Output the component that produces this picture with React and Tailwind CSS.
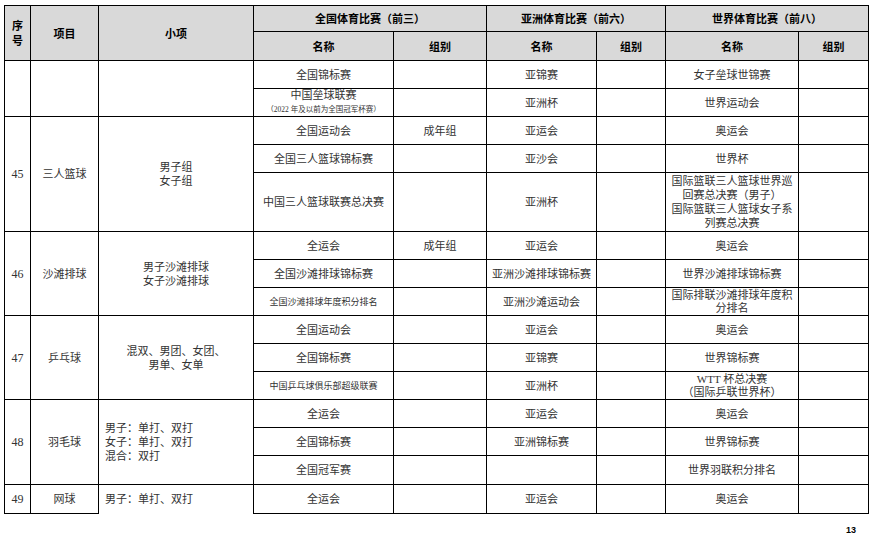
import React from "react"

const body = "font-['Liberation_Serif','Noto_Sans_CJK_SC',serif]"
const cell = "border border-black text-center align-middle text-[11px] text-[#333] leading-[14px] px-1"
const head = "border border-black bg-[#d9d9d9] text-center align-middle text-[11px] font-bold text-black font-['Noto_Sans_CJK_SC',sans-serif]"
const num = `${cell} text-[12px]`

function Row({ name1, group1 = "", name2 = "", name3 = "", h = "h-[28px]", lead }) {
  return (
    <tr className={h}>
      {lead}
      <td className={cell}>{name1}</td>
      <td className={cell}>{group1}</td>
      <td className={cell}>{name2}</td>
      <td className={cell}></td>
      <td className={cell}>{name3}</td>
      <td className={cell}></td>
    </tr>
  )
}

export default function App() {
  return (
    <div className={`w-[874px] h-[539px] bg-white pt-[5px] pl-[4px] ${body}`}>
      <table className="border-collapse table-fixed w-[864px]">
        <colgroup>
          <col className="w-[26px]" />
          <col className="w-[68px]" />
          <col className="w-[155px]" />
          <col className="w-[140px]" />
          <col className="w-[93px]" />
          <col className="w-[110px]" />
          <col className="w-[69px]" />
          <col className="w-[133px]" />
          <col className="w-[70px]" />
        </colgroup>
        <thead>
          <tr className="h-[26px]">
            <th rowSpan={2} className={`${head} leading-[15px]`}>序<br />号</th>
            <th rowSpan={2} className={head}>项目</th>
            <th rowSpan={2} className={head}>小项</th>
            <th colSpan={2} className={head}>全国体育比赛（前三）</th>
            <th colSpan={2} className={head}>亚洲体育比赛（前六）</th>
            <th colSpan={2} className={head}>世界体育比赛（前八）</th>
          </tr>
          <tr className="h-[29px]">
            <th className={head}>名称</th>
            <th className={head}>组别</th>
            <th className={head}>名称</th>
            <th className={head}>组别</th>
            <th className={head}>名称</th>
            <th className={head}>组别</th>
          </tr>
        </thead>
        <tbody>
          {/* 上页延续：垒球 */}
          <Row
            lead={
              <>
                <td rowSpan={2} className={cell}></td>
                <td rowSpan={2} className={cell}></td>
                <td rowSpan={2} className={cell}></td>
              </>
            }
            name1="全国锦标赛"
            name2="亚锦赛"
            name3="女子垒球世锦赛"
          />
          <Row
            name1={
              <div className="flex flex-col items-center">
                <span className="leading-[13px]">中国垒球联赛</span>
                <span className="text-[7.5px] leading-[12px] mt-[2px]">（2022 年及以前为全国冠军杯赛）</span>
              </div>
            }
            name2="亚洲杯"
            name3="世界运动会"
          />

          {/* 45 三人篮球 */}
          <Row
            lead={
              <>
                <td rowSpan={3} className={num}>45</td>
                <td rowSpan={3} className={cell}>三人篮球</td>
                <td rowSpan={3} className={cell}>男子组<br />女子组</td>
              </>
            }
            name1="全国运动会"
            group1="成年组"
            name2="亚运会"
            name3="奥运会"
          />
          <Row name1="全国三人篮球锦标赛" name2="亚沙会" name3="世界杯" />
          <Row
            h="h-[59px]"
            name1="中国三人篮球联赛总决赛"
            name2="亚洲杯"
            name3={
              <>
                国际篮联三人篮球世界巡<br />回赛总决赛（男子）<br />国际篮联三人篮球女子系<br />列赛总决赛
              </>
            }
          />

          {/* 46 沙滩排球 */}
          <Row
            lead={
              <>
                <td rowSpan={3} className={num}>46</td>
                <td rowSpan={3} className={cell}>沙滩排球</td>
                <td rowSpan={3} className={cell}>男子沙滩排球<br />女子沙滩排球</td>
              </>
            }
            name1="全运会"
            group1="成年组"
            name2="亚运会"
            name3="奥运会"
          />
          <Row name1="全国沙滩排球锦标赛" name2="亚洲沙滩排球锦标赛" name3="世界沙滩排球锦标赛" />
          <Row
            name1={<span className="text-[9px]">全国沙滩排球年度积分排名</span>}
            name2="亚洲沙滩运动会"
            name3={
              <span className="leading-[13px] block">
                国际排联沙滩排球年度积<br />分排名
              </span>
            }
          />

          {/* 47 乒乓球 */}
          <Row
            lead={
              <>
                <td rowSpan={3} className={num}>47</td>
                <td rowSpan={3} className={cell}>乒乓球</td>
                <td rowSpan={3} className={cell}>混双、男团、女团、<br />男单、女单</td>
              </>
            }
            name1="全国运动会"
            name2="亚运会"
            name3="奥运会"
          />
          <Row name1="全国锦标赛" name2="亚锦赛" name3="世界锦标赛" />
          <Row
            name1={<span className="text-[9px]">中国乒乓球俱乐部超级联赛</span>}
            name2="亚洲杯"
            name3={
              <span className="leading-[13px] block">
                WTT 杯总决赛<br />（国际乒联世界杯）
              </span>
            }
          />

          {/* 48 羽毛球 */}
          <Row
            lead={
              <>
                <td rowSpan={3} className={num}>48</td>
                <td rowSpan={3} className={cell}>羽毛球</td>
                <td rowSpan={3} className={`${cell} text-left pl-[6px]`}>
                  男子：单打、双打<br />女子：单打、双打<br />混合：双打
                </td>
              </>
            }
            name1="全运会"
            name2="亚运会"
            name3="奥运会"
          />
          <Row name1="全国锦标赛" name2="亚洲锦标赛" name3="世界锦标赛" />
          <Row h="h-[29px]" name1="全国冠军赛" name3="世界羽联积分排名" />

          {/* 49 网球 */}
          <Row
            h="h-[29px]"
            lead={
              <>
                <td className={num}>49</td>
                <td className={cell}>网球</td>
                <td className={`${cell} text-left pl-[6px] border-b-0`}>男子：单打、双打</td>
              </>
            }
            name1="全运会"
            name2="亚运会"
            name3="奥运会"
          />
        </tbody>
      </table>
      <div className="flex justify-end pr-[18px] mt-[10px]">
        <span className="text-[9px] font-bold text-black font-['Liberation_Sans',sans-serif]">13</span>
      </div>
    </div>
  )
}
